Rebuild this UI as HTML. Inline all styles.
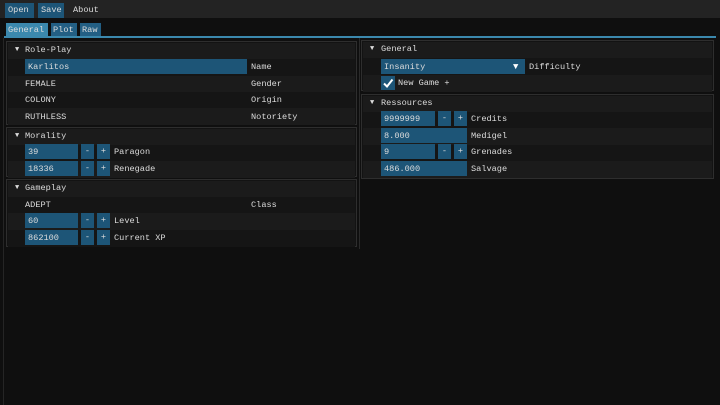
<!DOCTYPE html>
<html><head><meta charset="utf-8"><style>
*{margin:0;padding:0;box-sizing:border-box}
body{width:720px;height:405px;background:#0f0f0f;position:relative;overflow:hidden;font-family:"Liberation Mono",monospace;font-size:8.6px;color:#dcdcdc}
div{position:absolute}
.t{line-height:16px;white-space:pre}
.in{background:#1d5577;height:15px;padding-left:3px;line-height:16px}
.btn{background:#1d5577;height:15px;width:13px;text-align:center;line-height:15px}
.sec{border:1px solid #2e2e2e;background:#131313}
.row{height:17px;left:1px;right:1px}
.a{background:#1b1b1b}
.b{background:#151515}
.tri{font-size:7px}
</style></head><body>
<div style="left:0;top:0;width:720px;height:18px;background:#232323"></div>
<div class="t" style="left:5px;top:3px;width:29px;height:15px;background:#1d5577;padding-left:3px;line-height:15px">Open</div>
<div class="t" style="left:38px;top:3px;width:26px;height:15px;background:#1d5577;padding-left:3px;line-height:15px">Save</div>
<div class="t" style="left:73px;top:3px;line-height:15px">About</div>

<div class="t" style="left:6px;top:23px;width:42px;height:14px;background:#3b88ad;padding-left:2px;line-height:14px">General</div>
<div class="t" style="left:51px;top:23px;width:26px;height:14px;background:#235f84;padding-left:2px;line-height:14px">Plot</div>
<div class="t" style="left:80px;top:23px;width:21px;height:14px;background:#235f84;padding-left:2px;line-height:14px">Raw</div>
<div style="left:4px;top:36px;width:712px;height:2px;background:#3b88ad"></div>
<div style="left:3px;top:38px;width:1px;height:367px;background:#252525"></div>
<div style="left:359px;top:38px;width:1px;height:211px;background:#2a2a2a"></div>

<!-- Left column -->
<div class="sec" style="left:6px;top:41px;width:351px;height:84px">
 <div class="row a" style="top:1px"></div>
 <div class="row b" style="top:17px"></div>
 <div class="row a" style="top:34px"></div>
 <div class="row b" style="top:50px"></div>
 <div class="row a" style="top:66px"></div>
</div>
<div class="t tri" style="left:15px;top:42px">▼</div><div class="t" style="left:25px;top:42px">Role-Play</div>
<div class="in" style="left:25px;top:59px;width:222px">Karlitos</div><div class="t" style="left:251px;top:59px">Name</div>
<div class="t" style="left:25px;top:76px">FEMALE</div><div class="t" style="left:251px;top:76px">Gender</div>
<div class="t" style="left:25px;top:92px">COLONY</div><div class="t" style="left:251px;top:92px">Origin</div>
<div class="t" style="left:25px;top:109px">RUTHLESS</div><div class="t" style="left:251px;top:109px">Notoriety</div>

<div class="sec" style="left:6px;top:127px;width:351px;height:50px">
 <div class="row a" style="top:1px"></div>
 <div class="row b" style="top:17px"></div>
 <div class="row a" style="top:33px"></div>
</div>
<div class="t tri" style="left:15px;top:128px">▼</div><div class="t" style="left:25px;top:128px">Morality</div>
<div class="in" style="left:25px;top:144px;width:53px">39</div><div class="btn" style="left:81px;top:144px">-</div><div class="btn" style="left:97px;top:144px">+</div><div class="t" style="left:114px;top:144px">Paragon</div>
<div class="in" style="left:25px;top:161px;width:53px">18336</div><div class="btn" style="left:81px;top:161px">-</div><div class="btn" style="left:97px;top:161px">+</div><div class="t" style="left:114px;top:161px">Renegade</div>

<div class="sec" style="left:6px;top:179px;width:351px;height:68px">
 <div class="row a" style="top:1px"></div>
 <div class="row b" style="top:17px"></div>
 <div class="row a" style="top:33px"></div>
 <div class="row b" style="top:50px"></div>
</div>
<div class="t tri" style="left:15px;top:180px">▼</div><div class="t" style="left:25px;top:180px">Gameplay</div>
<div class="t" style="left:25px;top:197px">ADEPT</div><div class="t" style="left:251px;top:197px">Class</div>
<div class="in" style="left:25px;top:213px;width:53px">60</div><div class="btn" style="left:81px;top:213px">-</div><div class="btn" style="left:97px;top:213px">+</div><div class="t" style="left:114px;top:213px">Level</div>
<div class="in" style="left:25px;top:230px;width:53px">862100</div><div class="btn" style="left:81px;top:230px">-</div><div class="btn" style="left:97px;top:230px">+</div><div class="t" style="left:114px;top:230px">Current XP</div>

<!-- Right column -->
<div class="sec" style="left:361px;top:40px;width:353px;height:51px">
 <div class="row a" style="top:1px"></div>
 <div class="row b" style="top:17px"></div>
 <div class="row a" style="top:34px"></div>
</div>
<div class="t tri" style="left:370px;top:41px">▼</div><div class="t" style="left:381px;top:41px">General</div>
<div class="in" style="left:381px;top:59px;width:144px">Insanity</div>
<div class="t" style="left:513px;top:59px;font-size:9px;color:#fff">▼</div>
<div class="t" style="left:529px;top:59px">Difficulty</div>
<div style="left:381px;top:76px;width:14px;height:14px;background:#1d5577"></div>
<svg style="position:absolute;left:381px;top:76px" width="14" height="14"><path d="M3 7.5 L6 10.5 L11.5 3.5" stroke="#fff" stroke-width="2" fill="none"/></svg>
<div class="t" style="left:398px;top:75px">New Game +</div>

<div class="sec" style="left:361px;top:94px;width:353px;height:85px">
 <div class="row a" style="top:1px"></div>
 <div class="row b" style="top:17px"></div>
 <div class="row a" style="top:33px"></div>
 <div class="row b" style="top:50px"></div>
 <div class="row a" style="top:66px"></div>
</div>
<div class="t tri" style="left:370px;top:95px">▼</div><div class="t" style="left:381px;top:95px">Ressources</div>
<div class="in" style="left:381px;top:111px;width:54px">9999999</div><div class="btn" style="left:438px;top:111px">-</div><div class="btn" style="left:454px;top:111px">+</div><div class="t" style="left:471px;top:111px">Credits</div>
<div class="in" style="left:381px;top:128px;width:86px">8.000</div><div class="t" style="left:471px;top:128px">Medigel</div>
<div class="in" style="left:381px;top:144px;width:54px">9</div><div class="btn" style="left:438px;top:144px">-</div><div class="btn" style="left:454px;top:144px">+</div><div class="t" style="left:471px;top:144px">Grenades</div>
<div class="in" style="left:381px;top:161px;width:86px">486.000</div><div class="t" style="left:471px;top:161px">Salvage</div>
</body></html>
